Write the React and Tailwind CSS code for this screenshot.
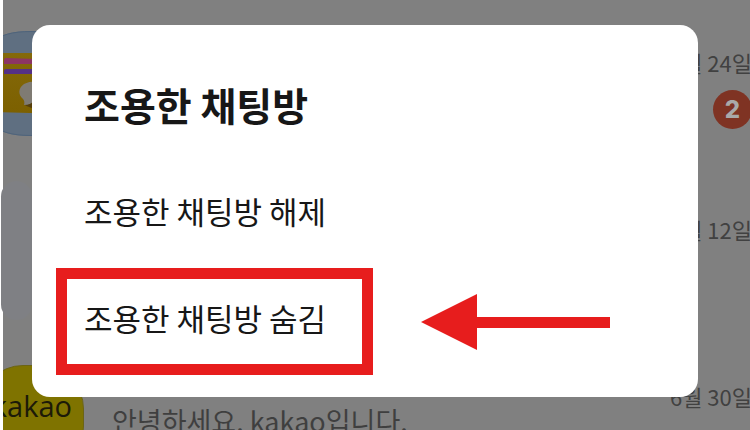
import React from 'react';
import clsx from 'clsx';

const chats = [
  { id: 1, date: '8월 24일', unread: 2, avatar: 'card' },
  { id: 2, date: '7월 12일' },
  { id: 3, date: '6월 30일', avatar: 'kakao', message: '안녕하세요. kakao입니다.' }
];

const actions = [
  { name: '조용한 채팅방 해제' },
  { name: '조용한 채팅방 숨김', highlighted: true }
];

function CardAvatar() {
  return (
    <svg viewBox="0 0 105 105" className="h-[105px] w-[105px] shrink-0" aria-hidden="true">
      <defs>
        <clipPath id="card-clip">
          <path d="M52 0C90 0 105 15 105 52S90 105 52 105S0 90 0 52S15 0 52 0Z" />
        </clipPath>
        <linearGradient id="card-fill" x1="0" y1="0" x2="0" y2="1">
          <stop offset="0" stopColor="#84690a" />
          <stop offset="1" stopColor="#7c6000" />
        </linearGradient>
      </defs>
      <g clipPath="url(#card-clip)">
        <rect width="105" height="105" fill="#5f6f81" />
        <path d="M18 22H87V83L18 81Z" fill="url(#card-fill)" />
        <path d="M27 27L87 29V33H25V29Q25 27 27 27Z" fill="#8c3564" />
        <path d="M27 38H87V43H25V40Q25 38 27 38Z" fill="#553086" />
        <path d="M45 73C48 77 66 80 66 80V66Z" fill="#553e0a" />
        <path d="M45 74Q46 70 44 68C39 64 39 57 45 53C50 50 57 50 66 51V66L56 69Q52 74 45 74Z" fill="#7f7b73" />
      </g>
      <path d="M52 .5C90 .5 104.500 15 104.500 52S90 104.500 52 104.500S.5 90 .5 52S15 .5 52 .5Z" fill="none" stroke="#4f647b" />
    </svg>
  );
}

function Avatar({ type }) {
  if (type === 'card') return <CardAvatar />;
  if (type === 'kakao') {
    return (
      <div className="flex h-[105px] w-[105px] shrink-0 items-start justify-end rounded-[44px] border border-[#6b6415] bg-[#7f7300] pt-5 pr-[11px] font-['Open_Sans',sans-serif] text-[29px] leading-10 text-[#1c1a08]">
        kakao
      </div>
    );
  }
  return <div className="h-[105px] w-[105px] shrink-0" />;
}

function ChatRow({ chat }) {
  return (
    <li className="flex h-[167px] pt-[31px]">
      <Avatar type={chat.avatar} />
      <p className="min-w-0 flex-1 truncate pt-9 pl-7 text-[27px] leading-10 text-[#3f3f3f]">{chat.message}</p>
      <div className="flex shrink-0 flex-col items-end pt-[15px]">
        <time className="text-[22px] leading-8 text-[#414141]">{chat.date}</time>
        {chat.unread && (
          <span className="mt-3 flex h-[39px] w-[39px] items-center justify-center rounded-full bg-[#7f3323] font-['Inter',sans-serif] text-2xl font-extrabold text-[#a9a9a9]">
            {chat.unread}
          </span>
        )}
      </div>
    </li>
  );
}

function Arrow() {
  return (
    <svg viewBox="0 0 189 56" className="h-14 w-[189px] shrink-0" aria-hidden="true">
      <path d="M0 28L56 0V23H189V34H56V56Z" fill="#e71d1d" />
    </svg>
  );
}

function RoomDialog() {
  return (
    <div
      role="dialog"
      aria-labelledby="dialog-title"
      className="w-full rounded-[18px] bg-white pt-[55px] pb-[22px] pl-6 text-[#171717]"
    >
      <h2 id="dialog-title" className="mb-[33px] pl-7 text-[39px] leading-12 font-bold">
        조용한 채팅방
      </h2>
      {actions.map((action) => (
        <div key={action.name} className="flex items-center gap-12">
          <button
            type="button"
            className={clsx(
              'h-[107px] w-[317px] border-[11px] px-[17px] pb-2 text-left text-[31px] leading-10 whitespace-nowrap',
              action.highlighted ? 'border-[#e71d1d]' : 'border-transparent'
            )}
          >
            {action.name}
          </button>
          {action.highlighted && <Arrow />}
        </div>
      ))}
    </div>
  );
}

export default function App() {
  return (
    <main className="relative h-screen overflow-hidden bg-white pl-[3px] font-['Noto_Sans_CJK_KR',sans-serif]">
      <div className="h-full overflow-hidden bg-[#808080]">
        <ul className="-mr-0.5 -ml-6">
          {chats.map((chat) => (
            <ChatRow key={chat.id} chat={chat} />
          ))}
        </ul>
      </div>
      {/* edge panel handle */}
      <div className="absolute top-[181px] left-px h-[139px] w-[31px] rounded-2xl bg-[#7f8084]" />
      <div className="absolute inset-0 flex items-start pt-[25px] pr-[52px] pl-8">
        <RoomDialog />
      </div>
    </main>
  );
}
